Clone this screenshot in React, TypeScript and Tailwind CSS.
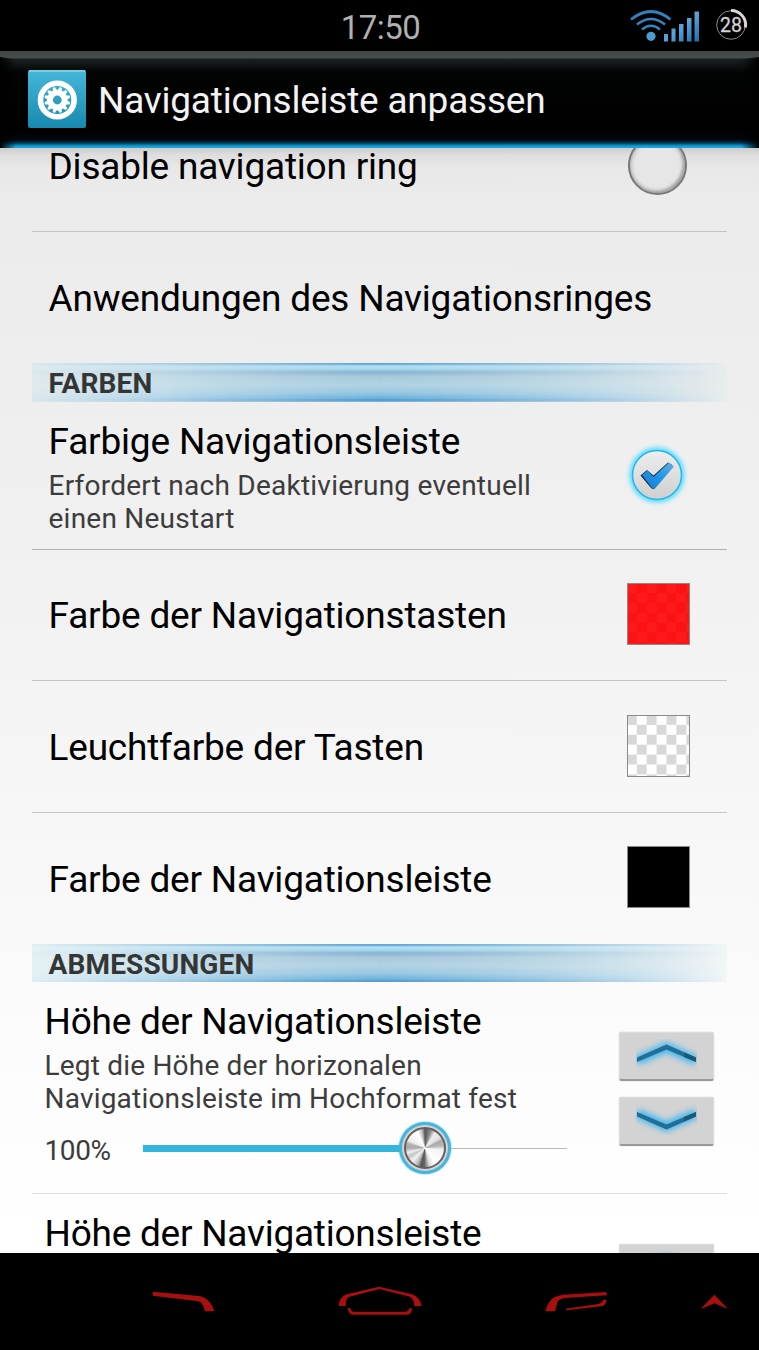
import React from 'react';

interface RowProps {
  title: string;
  children?: React.ReactNode;
  divider?: boolean;
}

const StatusBar: React.FC = () => (
  <div className="h-[51px] shrink-0 bg-black flex items-center relative">
    <span className="w-full pl-[2px] text-center text-[33px] leading-[51px] tracking-[-0.5px] pt-1 text-[#b0b0b0]">17:50</span>

    {/* Signal + battery sit over the right end of the bar */}
    <div className="absolute right-0 top-0 h-[51px] flex">
      <svg className="w-[76px] h-[51px]" viewBox="626 0 76 51" fill="none">
        <defs>
          <linearGradient id="sig" x1="0" y1="0" x2="1" y2="1">
            <stop offset="0" stopColor="#2878b4" />
            <stop offset="0.5" stopColor="#5aa4d6" />
            <stop offset="1" stopColor="#1d6fb0" />
          </linearGradient>
        </defs>
        <path d="M631 19.5Q651 3.5 670.5 19.5" stroke="#2d83c0" strokeWidth="2.8" />
        <path d="M637 24.5Q651 13.5 665 24.5" stroke="#3585c2" strokeWidth="2.5" />
        <path d="M642 29.5Q651 22 660 29.5" stroke="#3585c2" strokeWidth="2.3" />
        <circle cx="651" cy="36.3" r="4.6" fill="#4b9ad0" />
        <path d="M664 34h4v7.5h-4zM671.500 28.500h4v13h-4zM679 24h4.500v17.500h-4.500zM687 18h4.500v23.500h-4.500zM694.500 11.500h4.500v30h-4.500z" fill="url(#sig)" />
      </svg>
      <svg className="w-[57px] h-[51px]" viewBox="702 0 57 51" fill="none">
        <circle cx="731" cy="25" r="14.3" stroke="#8c8c8c" strokeWidth="1" />
        <path d="M731 10.500A14.500 14.500 0 0 1 745.400 27.500" stroke="#d8d8d8" strokeWidth="3" />
        <text x="731" y="32" fontSize="19.500" textAnchor="middle" fill="#d2d2d2" stroke="#d2d2d2" strokeWidth="0.3">28</text>
      </svg>
    </div>
  </div>
);

const teeth = Array.from({ length: 12 }, (_, i) => i * 30);

const ActionBar: React.FC = () => (
  <header className="h-[97px] shrink-0 relative flex items-center pl-7 bg-[linear-gradient(to_bottom,#414645_0px,#484d4c_7px,#1b2121_8px,#0c1111_15px,#020303_22px,#000_80px,#000810_89px,#003a55_92px,#109cd2_95px,#2aa5d8_97px)]">
    <svg className="absolute inset-0 w-full h-full" viewBox="0 0 759 97">
      <defs>
        <linearGradient id="edgeL"><stop offset="0" stopColor="#000" /><stop offset="1" stopColor="#000" stopOpacity="0" /></linearGradient>
        <linearGradient id="edgeR"><stop offset="0" stopColor="#000" stopOpacity="0" /><stop offset="1" stopColor="#000" /></linearGradient>
      </defs>
      <path d="M0 6Q8 7 16 8V97H0Z" fill="url(#edgeL)" />
      <path d="M759 6Q750 7 741 8V97H759Z" fill="url(#edgeR)" />
    </svg>

    <svg className="relative w-[58px] h-[58px] -mt-[1px]" viewBox="0 0 58 58">
      <defs>
        <linearGradient id="tile" x1="0" y1="0" x2="0" y2="1">
          <stop offset="0" stopColor="#45b8da" />
          <stop offset="1" stopColor="#1789ae" />
        </linearGradient>
      </defs>
      <rect width="58" height="58" rx="2" fill="url(#tile)" />
      <path d="M1 1h56" stroke="#8ed3e6" strokeWidth="1.500" />
      <circle cx="29.300" cy="30" r="16.800" fill="none" stroke="#fff" strokeWidth="5.600" />
      <circle cx="29.300" cy="30" r="7.400" fill="none" stroke="#fff" strokeWidth="6" />
      {teeth.map((a) => (
        <path key={a} d="M27.300 20.500L28.100 17h2.400L31.300 20.500Z" fill="#fff" transform={`rotate(${a + 15} 29.300 30)`} />
      ))}
    </svg>
    <h1 className="relative ml-3 mt-0.5 text-[37px] leading-[44px] tracking-[-0.22px] text-[#f3f3f3] whitespace-nowrap">Navigationsleiste anpassen</h1>
  </header>
);

const Row: React.FC<RowProps> = ({ title, children, divider }) => (
  <div className={`flex items-center justify-between pl-[16.500px] pr-[37px] ${divider ? 'h-[131.670px] border-b border-[#c4c4c4]' : 'h-[131px]'}`}>
    <span className="text-[37px] leading-[44px] tracking-[-0.2px] pt-[3px] text-black whitespace-nowrap">{title}</span>
    {children}
  </div>
);

const SectionHeader: React.FC<{ title: string }> = ({ title }) => (
  <div className="h-[38.500px] relative shrink-0">
    <div className="absolute inset-0 bg-[linear-gradient(to_right,#d0e9f060,#c4e2eeaa_20%,#b3d3e2_50%,#c6e0eaaa_80%,#dfeaec40)]" />
    <div className="absolute inset-0 bg-[linear-gradient(to_bottom,#5c9fd2_0px,#6cb0dc_1.500px,#b4e0f2_3px,#a8d8ee_6px,#84b2d0_9px,#a9cadc_14px,#b2d2e2_22px,#94c6e2_30px,#62acdc_36px,#4a90c8_37px,#7ab0d8_38.500px)] [mask-image:linear-gradient(to_right,#0001,#0004_15%,#0009_33%,#000_50%,#000b_63%,#0006_80%,#0000)]" />
    <h2 className="relative pl-[16.500px] pt-1 text-[28px] leading-[34px] tracking-[0.15px] font-bold text-[#333635]">{title}</h2>
  </div>
);

const swatches = {
  red: 'bg-[repeating-conic-gradient(#ff1a1a_0_25%,#fb1212_0_50%)]',
  clear: 'bg-[repeating-conic-gradient(#d8d8d8_0_25%,#fff_0_50%)]',
  black: 'bg-black',
};

const Swatch: React.FC<{ color: keyof typeof swatches }> = ({ color }) => (
  <div className={`w-[63px] h-[62px] -mt-0.5 border-[1.5px] border-[#8a8a8a] bg-[length:19.800px_19.800px] bg-[position:-11px_-1px] ${swatches[color]}`} />
);

const StepButton: React.FC<{ down?: boolean }> = ({ down }) => (
  <button className="block w-[95px] h-[49px] rounded-[3px] bg-[#d3d3d3] border border-[#dcdcdc] border-b-2 border-b-[#999] shadow-[0_0_1px_#999]">
    <svg className="w-[61px] h-[31px] ml-4 mb-0.5 overflow-hidden" viewBox="0 0 61 31">
      <g transform={down ? 'matrix(1 0 0 -1 0 31)' : undefined} fill="none">
        <path d="M1 21.500L30.500 8.500L60 21.500" stroke="#35b5f5" strokeWidth="9" className="blur-[3px]" />
        <path d="M1 18.500L30.500 5.500L60 18.500V23L30.500 10.500L1 23Z" fill="#1f6f96" />
        <path d="M60 18.500V23L48 18V13.500Z" fill="#1b5875" />
      </g>
    </svg>
  </button>
);

const SliderRow: React.FC = () => (
  <div className="h-[212px] shrink-0 flex justify-between pl-[12.500px] pr-[13px] border-b border-[#dedede]">
    <div className="pt-[18px]">
      <div className="text-[37px] leading-[44px] tracking-[-0.24px] text-black whitespace-nowrap">Höhe der Navigationsleiste</div>
      <p className="mt-[5px] text-[28px] leading-[33px] tracking-[0.2px] text-[#3c3c3c] whitespace-nowrap">
        Legt die Höhe der horizonalen<br />
        Navigationsleiste im Hochformat fest
      </p>
      <div className="flex items-center mt-[7px] h-[52px]">
        <span className="w-[98.500px] text-[28px] leading-[33px] tracking-[-0.4px] pt-1 text-[#3c3c3c]">100%</span>
        <div className="relative flex items-center w-[424px] h-[52px]">
          <div className="w-full h-[1.5px] bg-[#b9b9b9]" />
          <div className="absolute left-0 w-[262px] h-[7px] bg-[#33b5dc]" />
          <div className="absolute left-[256px] top-0 w-[52px] h-[52px] rounded-full bg-[#45b5dc] p-[3px] shadow-[0_0_2px_#45b5dc]">
            <div className="w-full h-full rounded-full bg-[#d4d4d4] p-[2px]">
              <div className="w-full h-full rounded-full border-2 border-[#65605e] bg-[conic-gradient(#555_0deg,#8a8a8a_18deg,#eee_34deg,#e2e2e2_55deg,#aaa_66deg,#b8b8b8_82deg,#f4f4f4_96deg,#fff_145deg,#ddd_165deg,#666_182deg,#555_192deg,#bbb_205deg,#f2f2f2_225deg,#c4c4c4_242deg,#eee_255deg,#aaa_270deg,#b4b4b4_284deg,#eee_295deg,#fff_335deg,#bbb_350deg,#555_360deg)]" />
            </div>
          </div>
        </div>
      </div>
    </div>
    <div className="pt-[49.500px] space-y-4">
      <StepButton />
      <StepButton down />
    </div>
  </div>
);

const NavBar: React.FC = () => (
  <nav className="h-[97px] shrink-0 bg-black flex pt-8 pl-[150px] fill-[#a80f0f]">
    <svg className="w-[68px] h-[30px]" viewBox="60 75 204 90">
      <path d="M68 95L200 107Q222 109 235 122Q247 133 253 154H225Q220 128 205 124L68 107Z" />
    </svg>
    <svg className="w-[88px] h-[30px] ml-[118px]" viewBox="618 75 264 90">
      <path d="M626 138Q628 111 650 103L747 80L846 103Q870 112 875 138H853Q852 117 840 110L748 87L656 111Q648 116 647 138Z" />
      <path d="M652 145L660 144Q664 155 672 155H826Q835 155 839 144L847 146Q844 164 830 164H668Q657 164 652 145Z" />
    </svg>
    <svg className="w-[68px] h-[30px] ml-[118px]" viewBox="66 75 204 90">
      <path d="M76 154Q84 122 104 111Q114 106 130 104L258 96L262 106L135 114Q118 116 113 125L105 154Z" />
      <path d="M136 146L235 132Q245 129 251 119L260 120Q258 137 243 139L140 151Z" />
    </svg>
    <svg className="w-[32px] h-[30px] ml-[88px]" viewBox="535 75 96 90">
      <path d="M542 148L584 104L625 147L584 130Z" />
    </svg>
  </nav>
);

export default function App() {
  return (
    <div className="w-[759px] h-[1350px] flex flex-col overflow-hidden bg-black font-[Roboto,sans-serif]">
      <StatusBar />
      <ActionBar />

      <main className="h-[1105px] shrink-0 overflow-hidden px-8 bg-[linear-gradient(to_bottom,#cdcdcd_0px,#dedede_7px,#e8e8e8_20px,#ebebeb_45px,#eeeeee_240px,#f2f2f2_460px,#fbfbfb_860px,#fff_1080px)]">
        <div className="-mt-[47.500px]">
          <Row title="Disable navigation ring" divider>
            <div className="w-[59px] h-[59px] mr-[3px] rounded-full border-2 border-[#777] bg-[#e6e6e6] shadow-[inset_0_0_5px_#999,inset_-2px_-2px_3px_#aaa]" />
          </Row>
          <Row title="Anwendungen des Navigationsringes" />

          <SectionHeader title="FARBEN" />
          <div className="h-[148px] flex justify-between pl-[16.500px] pr-[43px] pt-[18.500px] border-b border-[#b0b0b0]">
            <div>
              <div className="text-[37px] leading-[44px] tracking-[-0.18px] text-black whitespace-nowrap">Farbige Navigationsleiste</div>
              <p className="mt-[5px] text-[28px] leading-[33px] tracking-[0.24px] text-[#3c3c3c] whitespace-nowrap">
                Erfordert nach Deaktivierung eventuell<br />
                einen Neustart
              </p>
            </div>
            <svg className="w-[54px] h-[54px] mt-7 overflow-visible" viewBox="0 0 54 54">
              <defs>
                <linearGradient id="disc" x1="0" y1="0" x2="0" y2="1">
                  <stop offset="0" stopColor="#eee" />
                  <stop offset="1" stopColor="#cfcfcf" />
                </linearGradient>
                <linearGradient id="tick" x1="0" y1="1" x2="1" y2="0">
                  <stop offset="0" stopColor="#1e78c4" />
                  <stop offset="0.5" stopColor="#1c96ea" />
                  <stop offset="1" stopColor="#6aaede" />
                </linearGradient>
              </defs>
              <circle cx="27" cy="27" r="25" fill="none" stroke="#4ddcff" strokeWidth="5" className="blur-[2px]" />
              <circle cx="27" cy="27" r="24.500" fill="url(#disc)" stroke="#22b5ea" strokeWidth="1.500" />
              <path d="M10.500 27.500L17 22L23.500 27.500L38 14.500L42.500 17L24.500 40.500Q23 42 21 40Z" fill="#1c2b38" />
              <path d="M12 27L17.500 22.500L23.500 29L39 14.500L44 18.500L25 40.500Q23.500 41.500 22 40Z" fill="url(#tick)" />
            </svg>
          </div>
          <Row title="Farbe der Navigationstasten" divider><Swatch color="red" /></Row>
          <Row title="Leuchtfarbe der Tasten" divider><Swatch color="clear" /></Row>
          <Row title="Farbe der Navigationsleiste"><Swatch color="black" /></Row>

          <SectionHeader title="ABMESSUNGEN" />
          <SliderRow />
          <SliderRow />
        </div>
      </main>

      <NavBar />
    </div>
  );
}
